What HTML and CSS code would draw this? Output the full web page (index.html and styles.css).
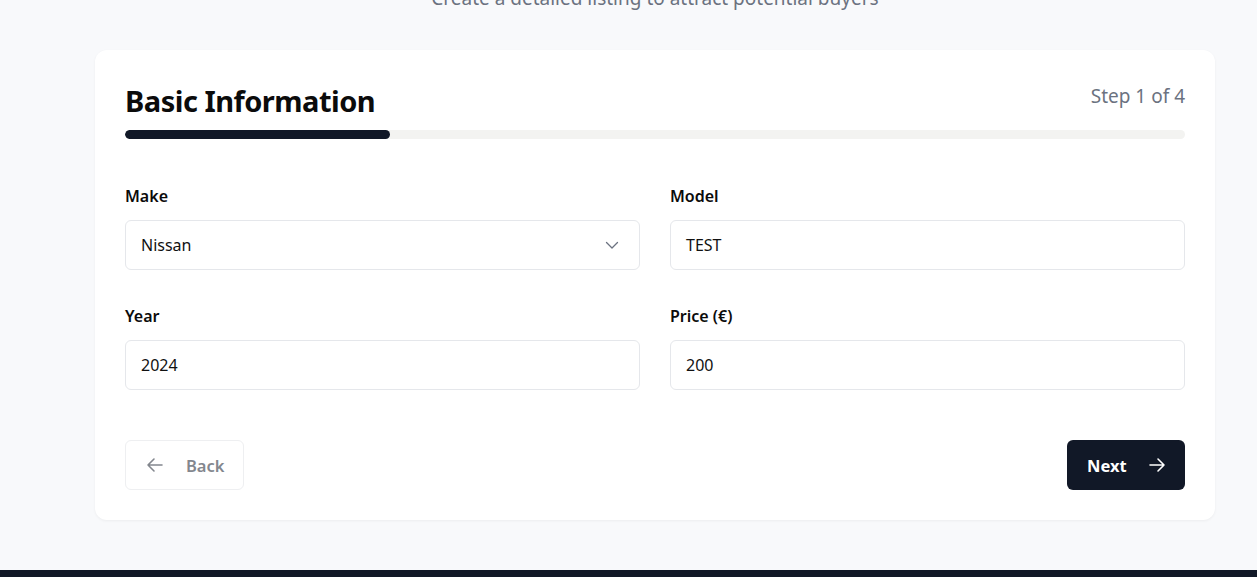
FILE: index.html
```html
<!DOCTYPE html>
<html lang="en">
<head>
<meta charset="utf-8">
<title>Create Listing</title>
<link rel="stylesheet" href="styles.css">
</head>
<body>
<main class="page">
  <header class="page-head">
    <h1 class="page-title">Sell Your Car</h1>
    <p class="page-sub">Create a detailed listing to attract potential buyers</p>
  </header>
  <section class="card">
    <div class="card-head">
      <h2 class="card-title">Basic Information</h2>
      <span class="step">Step 1 of 4</span>
    </div>
    <div class="progress"><div class="progress-fill" style="width:25%"></div></div>
    <div class="grid">
      <div class="field">
        <label class="label">Make</label>
        <div class="input select">
          <span>Nissan</span>
          <svg class="chev" width="24" height="24" viewBox="0 0 24 24" fill="none" stroke="currentColor" stroke-width="1.3" stroke-linecap="round" stroke-linejoin="round"><path d="M6.5 9.5l5.5 5.5 5.5-5.5"/></svg>
        </div>
      </div>
      <div class="field">
        <label class="label">Model</label>
        <div class="input">TEST</div>
      </div>
      <div class="field">
        <label class="label">Year</label>
        <div class="input">2024</div>
      </div>
      <div class="field">
        <label class="label">Price (€)</label>
        <div class="input">200</div>
      </div>
    </div>
    <div class="actions">
      <button class="btn btn-back">
        <svg width="24" height="24" viewBox="0 0 24 24" fill="none" stroke="currentColor" stroke-width="1.6" stroke-linecap="round" stroke-linejoin="round"><path d="M19 12H5M11 18l-6-6 6-6"/></svg>
        <span>Back</span>
      </button>
      <button class="btn btn-next">
        <span>Next</span>
        <svg width="24" height="24" viewBox="0 0 24 24" fill="none" stroke="currentColor" stroke-width="1.6" stroke-linecap="round" stroke-linejoin="round"><path d="M5 12h14M13 6l6 6-6 6"/></svg>
      </button>
    </div>
  </section>
</main>
<footer class="footer"></footer>
</body>
</html>
```
FILE: styles.css
```css
* { box-sizing: border-box; }
html, body { margin: 0; padding: 0; }
body {
  background: #f8f9fb;
  font-family: "Noto Sans", "Open Sans", sans-serif;
  color: #111;
  overflow: hidden;
}
.page {
  width: 1120px;
  margin-left: 95px;
  margin-top: -52px;
  padding-bottom: 50px;
}
.page-head {
  text-align: center;
  height: 102px;
}
.page-title {
  margin: 0;
  height: 36px;
  font-size: 30px;
}
.page-sub {
  margin: 0;
  padding-top: 1px;
  font-size: 19px;
  line-height: 26px;
  color: #6b7280;
}
.card {
  background: #fff;
  border-radius: 12px;
  box-shadow: 0 1px 3px rgba(0,0,0,0.05);
  padding: 30px 30px 30px;
  height: 470px;
}
.card-head {
  display: flex;
  justify-content: space-between;
  align-items: flex-start;
  padding-top: 3px;
}
.card-title {
  margin: 0;
  font-size: 29px;
  line-height: 36px;
  font-weight: 700;
  color: #0b0b0b;
  letter-spacing: -0.5px;
}
.step {
  font-size: 19px;
  line-height: 26px;
  color: #6b7280;
}
.progress {
  margin-top: 11px;
  height: 9px;
  border-radius: 5px;
  background: #f3f3f1;
  overflow: hidden;
}
.progress-fill {
  height: 100%;
  background: #111827;
  border-radius: 5px;
}
.grid {
  display: grid;
  grid-template-columns: 1fr 1fr;
  column-gap: 30px;
  row-gap: 34px;
  margin-top: 45px;
}
.field { display: flex; flex-direction: column; }
.label {
  font-size: 16px;
  line-height: 24px;
  font-weight: 600;
  color: #0b0b0b;
  height: 24px;
  margin-bottom: 12px;
}
.input {
  height: 50px;
  border: 1px solid #e5e7eb;
  border-radius: 6px;
  padding: 0 15px;
  display: flex;
  align-items: center;
  font-size: 16px;
  color: #111;
}
.select { justify-content: space-between; }
.chev { color: #6b7280; }
.actions {
  display: flex;
  justify-content: space-between;
  margin-top: 50px;
}
.btn {
  height: 50px;
  border-radius: 6px;
  font-family: inherit;
  font-size: 16.5px;
  display: flex;
  align-items: center;
  cursor: pointer;
}
.btn-back {
  width: 119px;
  padding: 0 0 0 17px;
  gap: 19px;
  background: #fff;
  border: 1px solid #eeeff1;
  color: #83878e;
  font-weight: 600;
}
.btn-next {
  width: 118px;
  padding: 0 0 0 20px;
  gap: 18px;
  background: #111827;
  border: none;
  color: #fff;
  font-weight: 700;
}
.footer {
  position: fixed;
  left: 0; right: 0; bottom: 0;
  height: 7px;
  background: #111827;
}
```
